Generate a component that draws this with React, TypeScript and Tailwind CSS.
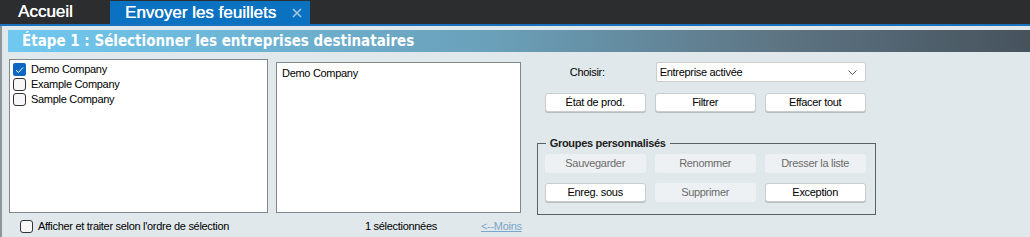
import React from "react";

function Check({ checked }: { checked?: boolean }) {
  return checked ? (
    <span className="w-[13px] h-[13px] rounded-[2px] bg-[#0b67c2] flex items-center justify-center shrink-0">
      <svg width="9" height="8" viewBox="0 0 9 8">
        <path d="M1 4.2 L3.4 6.5 L8 1.5" stroke="#fff" strokeWidth="1" fill="none" />
      </svg>
    </span>
  ) : (
    <span className="w-[13px] h-[13px] rounded-[3px] border border-[#333] bg-[#f7f7f7] shrink-0" />
  );
}

function Btn({ label, disabled }: { label: string; disabled?: boolean }) {
  return disabled ? (
    <div className="w-[101px] h-[19px] rounded-[3px] bg-[#eef1f3] text-[#6b6b6b] flex items-center justify-center">
      {label}
    </div>
  ) : (
    <div className="w-[101px] h-[19px] rounded-[3px] bg-white border border-[#c9cdd0] shadow-[0_1px_0_#b8bdc0] text-black flex items-center justify-center">
      {label}
    </div>
  );
}

export default function App() {
  return (
    <div className="w-[1030px] h-[237px] bg-[#e1e8eb] font-['Liberation_Sans',Arial,sans-serif] text-[11px] tracking-[-0.3px] text-black overflow-hidden">
      <div className="h-[24px] bg-[#2c2d2f] flex items-end">
        <div className="w-[110px] h-[24px] pl-[18px] flex items-center text-[17px] tracking-normal text-white [text-shadow:0.3px_0_0_#fff]">
          Accueil
        </div>
        <div className="w-[200px] h-[23px] bg-[#0b72c2] flex items-center pl-[15px] text-[17px] tracking-normal text-white [text-shadow:0.3px_0_0_#fff]">
          Envoyer les feuillets
          <svg className="ml-[16px]" width="10" height="10" viewBox="0 0 10 10">
            <path d="M1 1 L9 9 M9 1 L1 9" stroke="#a7c8e4" strokeWidth="1.6" />
          </svg>
        </div>
      </div>
      <div className="h-[2px] bg-[#1a72bf]" />
      <div className="border-l-2 border-[#8d969b] h-[211px]">
        <div className="h-[4px]" />
        <div className="ml-[6px] h-[22px] bg-[linear-gradient(to_right,#70c8f0_0%,#6a9fb8_48%,#5e7584_75%,#46535d_100%)] flex items-center pl-[14px] font-['DejaVu_Sans_Condensed','DejaVu_Sans',sans-serif] font-bold text-[15px] tracking-normal text-white">
          Étape 1 : Sélectionner les entreprises destinataires
        </div>
        <div className="flex">
          <div className="flex flex-col">
            <div className="flex items-start">
              <div className="ml-[7px] mt-[7px] w-[259px] h-[154px] bg-white border border-[#82878a] pt-[2px] pl-[3px] flex flex-col">
                {[
                  ["Demo Company", true],
                  ["Example Company", false],
                  ["Sample Company", false],
                ].map(([n, c]) => (
                  <div key={n as string} className="h-[15px] flex items-center gap-[5px]">
                    <Check checked={c as boolean} />
                    <span>{n as string}</span>
                  </div>
                ))}
              </div>
              <div className="ml-[8px] mt-[10px] w-[245px] h-[151px] bg-white border border-[#82878a] pt-[2px] pl-[5px]">
                Demo Company
              </div>
            </div>
            <div className="flex items-center h-[18px] mt-[4px]">
              <div className="ml-[18px] flex items-center gap-[5px] w-[330px]">
                <Check />
                <span>Afficher et traiter selon l'ordre de sélection</span>
              </div>
              <span className="ml-[15px]">1 sélectionnées</span>
              <span className="ml-[44px] text-[#7aa6c8] underline">&lt;--Moins</span>
            </div>
          </div>
          <div className="ml-[21px] flex flex-col">
            <div className="mt-[10px] flex items-center h-[20px]">
              <span className="w-[62px] text-right">Choisir:</span>
              <div className="ml-[51px] w-[210px] h-[20px] bg-white border border-[#c9cdd0] rounded-[2px] flex items-center justify-between pl-[3px] pr-[8px]">
                <span>Entreprise activée</span>
                <svg width="9" height="5" viewBox="0 0 9 5">
                  <path d="M0.5 0.5 L4.5 4.5 L8.5 0.5" stroke="#555" strokeWidth="1" fill="none" />
                </svg>
              </div>
            </div>
            <div className="mt-[11px] ml-[2px] flex gap-[9px]">
              <Btn label="État de prod." />
              <Btn label="Filtrer" />
              <Btn label="Effacer tout" />
            </div>
            <div className="relative mt-[31px] ml-[-6px] w-[339px] h-[72px] border border-[#5c6064]">
              <div className="absolute left-[8px] top-[-9px] px-[4px] bg-[#e1e8eb] font-bold text-[11px] text-[#222]">
                Groupes personnalisés
              </div>
              <div className="pt-[10px] pl-[7px] grid grid-cols-[101px_101px_101px] gap-x-[9px] gap-y-[10px]">
                <Btn label="Sauvegarder" disabled />
                <Btn label="Renommer" disabled />
                <Btn label="Dresser la liste" disabled />
                <Btn label="Enreg. sous" />
                <Btn label="Supprimer" disabled />
                <Btn label="Exception" />
              </div>
            </div>
          </div>
        </div>
      </div>
    </div>
  );
}
